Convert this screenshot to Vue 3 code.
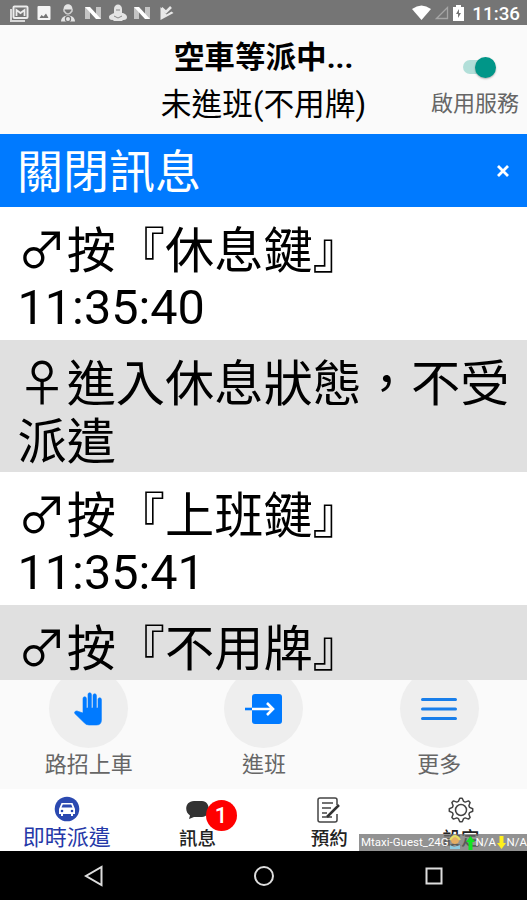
<template>
  <div class="phone">
    <div class="status-bar">
      <div class="notices">
        <svg class="notice" viewBox="0 0 20 18">
          <path d="M2 5v12h14" fill="none" stroke="#d8d8d8" stroke-width="2" />
          <rect x="4.500" y="2.500" width="14" height="11.500" rx="1" fill="#757575" stroke="#ececec" stroke-width="2" />
          <path d="M7.500 12V6l4 3 4-3v6" fill="none" stroke="#ececec" stroke-width="1.800" />
        </svg>
        <svg class="notice" viewBox="0 0 20 18">
          <rect x="3.500" y="2" width="13" height="14" rx="1" fill="#f5f5f5" />
          <path d="M5.500 14l2-3 2 1.500 2.500-3 2.500 4.500z" fill="#757575" />
        </svg>
        <svg class="notice" viewBox="0 0 20 18">
          <path d="M5.500 5.500c0-7 9-7 9 0z" fill="#e4e4e4" />
          <path d="M6 5v2q4 6 8 0V5" fill="none" stroke="#d0d0d0" stroke-width="1.500" />
          <path d="M3 17.500c0-8 14-8 14 0z" fill="#e4e4e4" />
          <circle cx="10" cy="15" r="2.600" fill="none" stroke="#757575" stroke-width="1.200" />
        </svg>
        <svg class="notice" viewBox="0 0 20 18">
          <path d="M2 3h5v12H2zM13 3h5v12h-5z" fill="#c4c4c4" />
          <path d="M2 3h5l11 12h-5z" fill="#fff" />
        </svg>
        <svg class="notice" viewBox="0 0 20 18">
          <path d="M6 9V5c0-6 8-6 8 0v4c2 0 5 2 5 4 0 4-4 2-5 4H6c-1-2-5 0-5-4 0-2 3-3 5-4z" fill="#e4e4e4" />
          <path d="M8 6h4M6 12l4 2 4-2" fill="none" stroke="#888" />
        </svg>
        <svg class="notice" viewBox="0 0 20 18">
          <path d="M2 3h5v12H2zM13 3h5v12h-5z" fill="#c4c4c4" />
          <path d="M2 3h5l11 12h-5z" fill="#fff" />
        </svg>
        <svg class="notice" viewBox="0 0 20 18">
          <path d="M3.500 3v13l13-7-2-1.500-5 3z" fill="#e8e8e8" />
          <path d="M4.500 4l4.500 4 5-5" fill="none" stroke="#e8e8e8" stroke-width="2.600" />
        </svg>
      </div>
      <div class="signals">
        <svg width="19" height="16" viewBox="0 0 19 16"><path d="M0 4Q9.500-3 19 4L9.500 15z" fill="#fff" /></svg>
        <svg width="14" height="14" viewBox="0 0 14 14"><path d="M12.500 1.500v11h-11z" fill="none" stroke="#a5a5a5" stroke-width="1.300" /></svg>
        <svg width="11" height="16" viewBox="0 0 11 16">
          <path d="M3 0h5v2h3v14H0V2h3z" fill="#fff" />
          <path d="M6 4L3 9h2v4l3-5H6z" fill="#757575" />
        </svg>
        <span class="clock">11:36</span>
      </div>
    </div>

    <header class="header">
      <div class="headline">
        <h1>空車等派中...</h1>
        <p>未進班(不用牌)</p>
      </div>
      <div class="service">
        <div class="switch"><span class="knob"></span></div>
        <span>啟用服務</span>
      </div>
    </header>

    <div class="close-bar">
      <span>關閉訊息</span>
      <svg width="12" height="12" viewBox="0 0 12 12"><path d="M1 1l10 10M11 1L1 11" stroke="#fff" stroke-width="2.800" /></svg>
    </div>

    <div class="messages">
      <div v-for="(msg, i) in messages" :key="i" class="message">
        <div>{{ msg.text }}</div>
        <div v-if="msg.time" class="time">{{ msg.time }}</div>
      </div>
    </div>

    <div class="actions">
      <div v-for="action in actions" :key="action.icon" class="action">
        <div class="round">
          <svg v-if="action.icon === 'hand'" width="30" height="34" viewBox="0 0 30 34">
            <path d="M9 21V6.500q0-1.700 1.700-1.700t1.700 1.700V16h1.600V2.500Q14 .800 15.700.800t1.700 1.700V16H19V3.500q0-1.700 1.700-1.700t1.700 1.700V16H24V7.500q0-1.700 1.700-1.700t1.700 1.700V28q0 5-5 5H15q-3 0-5-2.500L.800 21.500q-.800-1.500.700-2.300 1.500-.700 3 .300z" fill="#007aff" stroke="#007aff" stroke-width=".6" />
          </svg>
          <svg v-else-if="action.icon === 'enter'" width="38" height="32" viewBox="0 0 38 32">
            <rect x="7" y="1" width="30" height="30" rx="3" fill="#007aff" />
            <path d="M0 16h7" stroke="#007aff" stroke-width="2.600" />
            <path d="M7 16h21M22 10l6 6-6 6" fill="none" stroke="#fff" stroke-width="2.600" />
          </svg>
          <svg v-else width="36" height="24" viewBox="0 0 36 24">
            <path d="M1.500 2.500h33M1.500 12h33M1.500 21.500h33" stroke="#187eea" stroke-width="3" stroke-linecap="round" />
          </svg>
        </div>
        <span>{{ action.label }}</span>
      </div>
    </div>

    <nav class="tabs">
      <div class="tab active">
        <svg width="26" height="26" viewBox="0 0 26 26">
          <circle cx="13" cy="13" r="12.300" fill="#2b49b0" />
          <path d="M5 18v-5l2.500-6h11l2.500 6v5h-2v2h-2v-2H9v2H7v-2z" fill="#fff" />
          <path d="M7.500 11.500l1.300-3h8.400l1.300 3z" fill="#2b49b0" />
          <circle cx="8" cy="15" r="1.300" fill="#2b49b0" />
          <circle cx="18" cy="15" r="1.300" fill="#2b49b0" />
        </svg>
        <span>即時派遣</span>
      </div>
      <div class="tab">
        <div class="bubble">
          <svg width="24" height="20" viewBox="0 0 24 20">
            <path d="M8 1h8c9 0 9 16 0 16H8l-5 2 1-3.500C-2 12-1 1 8 1z" fill="#333" />
          </svg>
          <span class="badge">1</span>
        </div>
        <span>訊息</span>
      </div>
      <div class="tab">
        <svg width="24" height="26" viewBox="0 0 24 26">
          <path d="M20 8V3q0-2-2-2H3Q1 1 1 3v20q0 2 2 2h15q2 0 2-2v-6M5 6h11M5 11h9M5 16h5M5 20h10" fill="none" stroke="#444" stroke-width="1.500" />
          <path d="M22 8L12 18l-2 2" stroke="#333" stroke-width="2.500" />
        </svg>
        <span>預約</span>
      </div>
      <div class="tab">
        <svg width="26" height="26" viewBox="0 0 26 26">
          <path :d="gearPath" fill="none" stroke="#444" stroke-width="1.500" stroke-linejoin="round" />
          <circle cx="13" cy="13" r="5.500" fill="none" stroke="#444" stroke-width="1.500" />
        </svg>
        <span>設定</span>
      </div>
      <div class="network">
        <span class="ssid">Mtaxi-Guest_24G</span>
        <svg width="13" height="15" viewBox="0 0 13 15">
          <circle cx="6" cy="5" r="4" fill="#e5ae65" />
          <path d="M1 5q5-8 10 0" fill="none" stroke="#e5df62" stroke-width="2" />
          <path d="M1 10l4 2 6-2v4H1z" fill="#8ccbe2" />
        </svg>
        <svg class="up" width="9" height="14" viewBox="0 0 9 14"><path d="M4.500 0L9 6H6.500v8h-4V6H0z" fill="#11e622" /></svg>
        <span>N/A</span>
        <svg width="9" height="13" viewBox="0 0 9 13"><path d="M4.500 13L9 7H6.500V0h-4v7H0z" fill="#fff01c" /></svg>
        <span>N/A</span>
      </div>
    </nav>

    <div class="system-nav">
      <svg width="20" height="22" viewBox="0 0 20 22"><path d="M17.500 2v18L2 11z" fill="none" stroke="#ddd" stroke-width="2" /></svg>
      <svg width="22" height="22" viewBox="0 0 22 22"><circle cx="11" cy="11" r="9" fill="none" stroke="#ddd" stroke-width="2" /></svg>
      <svg width="20" height="20" viewBox="0 0 20 20"><rect x="2.500" y="2.500" width="15" height="15" fill="none" stroke="#ddd" stroke-width="2" /></svg>
    </div>
  </div>
</template>

<script setup>
const messages = [
  { text: '♂按『休息鍵』', time: '11:35:40' },
  { text: '♀進入休息狀態，不受派遣' },
  { text: '♂按『上班鍵』', time: '11:35:41' },
  { text: '♂按『不用牌』' }
]

const actions = [
  { icon: 'hand', label: '路招上車' },
  { icon: 'enter', label: '進班' },
  { icon: 'more', label: '更多' }
]

// eight teeth around the settings wheel
const gearPoints = Array.from({ length: 32 }, (_, i) => {
  const angle = (i - 0.5) * Math.PI / 16
  const radius = i % 4 < 2 ? 11.8 : 9
  return `${(13 + radius * Math.sin(angle)).toFixed(1)} ${(13 - radius * Math.cos(angle)).toFixed(1)}`
})
const gearPath = `M${gearPoints.join('L')}Z`
</script>

<style>
body {
  margin: 0;
  overflow: hidden;
}
</style>

<style scoped>
.phone {
  height: 100vh;
  display: flex;
  flex-direction: column;
  overflow: hidden;
  background: #fafafa;
  color: #000;
  font-family: Roboto, "Noto Sans CJK TC", sans-serif;
}

.phone > * {
  box-sizing: border-box;
  flex-shrink: 0;
}

svg {
  display: block;
  flex-shrink: 0;
}

.status-bar {
  height: 25px;
  padding: 1px 7px 0 9px;
  display: flex;
  align-items: center;
  justify-content: space-between;
  background: #757575;
}

.notices {
  display: flex;
  gap: 4.700px;
}

.notice {
  width: 20px;
  height: 18px;
}

.signals {
  display: flex;
  align-items: center;
  gap: 4px;
}

.clock {
  margin: 2px 0 0 4px;
  color: #fff;
  font-size: 18.800px;
  font-weight: 500;
  line-height: 22px;
}

.header {
  height: 109px;
  display: grid;
  grid-template-columns: 1fr 208px 1fr;
  padding-top: 9px;
}

.headline {
  grid-column: 2;
  text-align: center;
  white-space: nowrap;
}

.headline h1 {
  margin: 0;
  font-size: 30.600px;
  font-weight: 700;
  line-height: 47px;
}

.headline p {
  margin: 0;
  font-size: 30.700px;
  line-height: 47px;
}

.service {
  display: flex;
  flex-direction: column;
  align-items: flex-end;
  padding: 21px 8px 0 0;
  color: #666;
  font-size: 22px;
  line-height: 30px;
}

.switch {
  width: 32px;
  height: 14px;
  margin: 5px 24px 15px 0;
  display: flex;
  align-items: center;
  justify-content: flex-end;
  border-radius: 7px;
  background: #b2dfd9;
}

.knob {
  width: 21px;
  height: 21px;
  margin-right: -1px;
  border-radius: 50%;
  background: #009688;
  box-shadow: 0 1px 2px rgba(0, 0, 0, 0.3);
}

.close-bar {
  height: 73px;
  padding: 0 18px 0 17px;
  display: flex;
  align-items: center;
  justify-content: space-between;
  background: #007aff;
  color: #fff;
  font-size: 46px;
  line-height: 73px;
}

.close-bar span {
  padding-top: 3px;
}

.messages {
  height: 473px;
  overflow: hidden;
  background: #fff;
}

.message {
  box-sizing: border-box;
  height: 132.700px;
  padding: 11px 15px 5px 17.500px;
  font-family: "Noto Sans CJK TC", sans-serif;
  font-size: 49.200px;
  line-height: 58px;
}

.time {
  padding-top: 3px;
  font-family: Roboto, sans-serif;
  font-size: 48.600px;
}

.message:nth-child(even) {
  background: #e0e0e0;
}

.actions {
  height: 109px;
  display: grid;
  grid-template-columns: repeat(3, 1fr);
  padding-left: 1px;
  overflow: hidden;
}

.action {
  display: flex;
  flex-direction: column;
  align-items: center;
  color: #666;
  font-size: 22px;
  line-height: 34px;
}

.round {
  width: 79px;
  height: 79px;
  margin: -11px 0 0;
  display: flex;
  align-items: center;
  justify-content: center;
  border-radius: 50%;
  background: #eee;
}

.tabs {
  position: relative;
  height: 62px;
  display: grid;
  grid-template-columns: repeat(4, 1fr);
  background: #fff;
}

.tab {
  display: flex;
  flex-direction: column;
  align-items: center;
  padding-top: 8px;
  color: #222;
  font-size: 18.500px;
  font-weight: 500;
  line-height: 32px;
}

.tab.active {
  padding: 7px 0 0 2px;
  color: #2639a8;
  font-size: 22px;
  font-weight: 400;
}

.bubble {
  position: relative;
  height: 26px;
  padding-top: 3px;
  box-sizing: border-box;
}

.badge {
  position: absolute;
  top: 3px;
  left: 20px;
  width: 31px;
  height: 31px;
  border-radius: 50%;
  background: #f00;
  color: #fff;
  font-size: 22px;
  font-weight: 500;
  line-height: 32px;
  text-align: center;
}

.network {
  position: absolute;
  right: 0;
  bottom: 0;
  width: 168px;
  height: 17px;
  display: flex;
  align-items: center;
  justify-content: space-between;
  background: rgba(110, 110, 110, 0.75);
  color: #fff;
  font-size: 11.500px;
  line-height: 17px;
  white-space: nowrap;
}

.ssid {
  width: 87px;
  padding-left: 2px;
}

.up {
  margin-left: 3px;
}

.system-nav {
  height: 49px;
  padding: 0 83px 0 84px;
  display: flex;
  align-items: center;
  justify-content: space-between;
  background: #000;
}
</style>
